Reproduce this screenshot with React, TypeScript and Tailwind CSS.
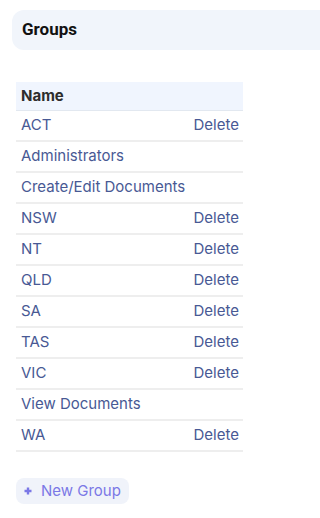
const groups = [
  { name: 'ACT', deletable: true },
  { name: 'Administrators', deletable: false },
  { name: 'Create/Edit Documents', deletable: false },
  { name: 'NSW', deletable: true },
  { name: 'NT', deletable: true },
  { name: 'QLD', deletable: true },
  { name: 'SA', deletable: true },
  { name: 'TAS', deletable: true },
  { name: 'VIC', deletable: true },
  { name: 'View Documents', deletable: false },
  { name: 'WA', deletable: true },
];

export default function App() {
  return (
    <div className="min-h-screen bg-white pt-[10px] pl-3 font-['Inter',sans-serif]">
      <div className="h-10 rounded-l-xl bg-[#f1f5fb] flex items-center pl-[10px]">
        <h1 className="text-[17px] font-bold text-[#111] font-['Roboto',sans-serif]">Groups</h1>
      </div>

      <div className="mt-8 ml-1 w-[227px]">
        <div className="h-[29px] bg-[#f0f5fe] border-b border-[#e2e8f0] flex items-center px-[5px]">
          <span className="text-[15px] font-bold text-[#2d2d2d]">Name</span>
        </div>
        {groups.map((g) => (
          <div
            key={g.name}
            className="h-[31px] border-b-2 border-[#eeeeee] flex items-center justify-between pl-[5px] pr-1 text-[15px] text-[#485994]"
          >
            <span>{g.name}</span>
            {g.deletable && <span>Delete</span>}
          </div>
        ))}

        <button className="mt-[26px] h-[26px] w-[113px] rounded-lg bg-[#f0f3fa] flex items-center gap-[9px] pl-2 text-[15px] text-[#7b78e6]">
          <svg width="8" height="8" viewBox="0 0 8 8" className="shrink-0">
            <path d="M4 0.5V7.5M0.5 4H7.5" stroke="currentColor" strokeWidth="2.4" />
          </svg>
          New Group
        </button>
      </div>
    </div>
  );
}
